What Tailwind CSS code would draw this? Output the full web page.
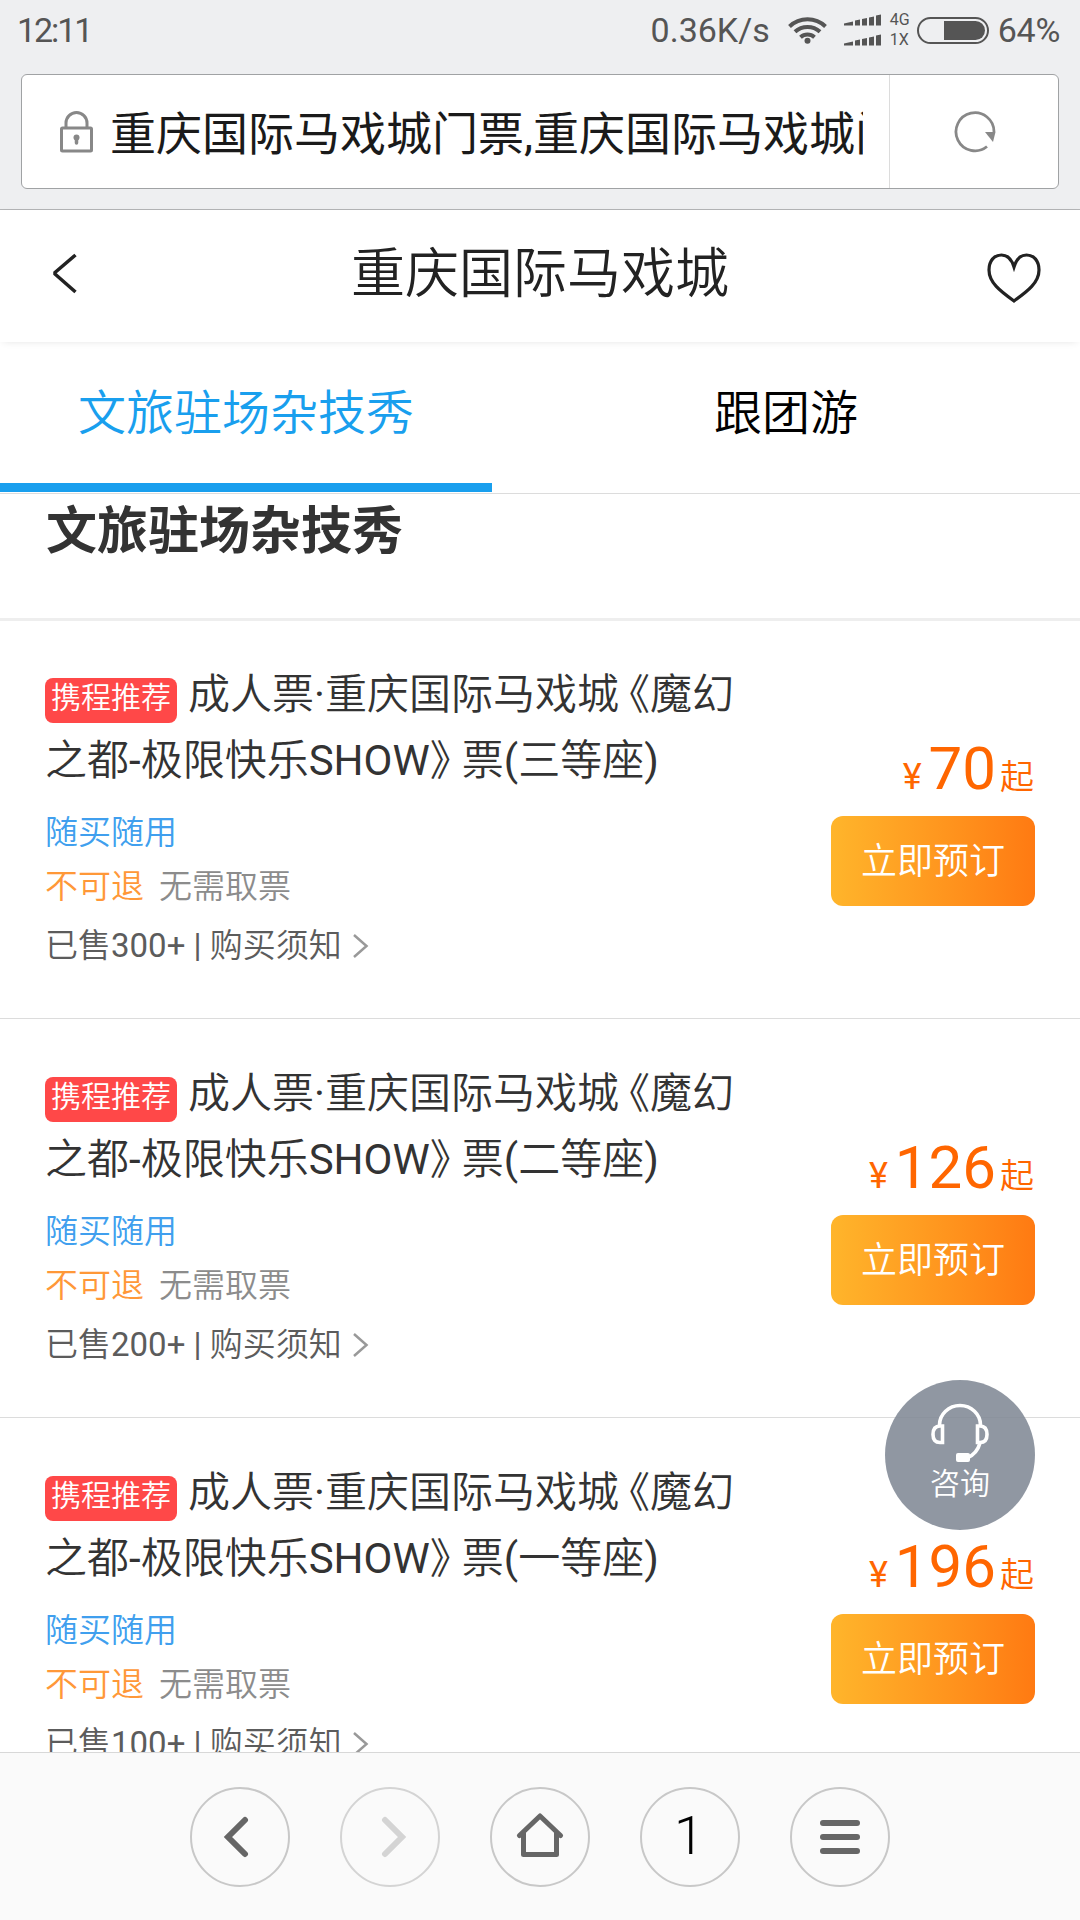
<!DOCTYPE html>
<html lang="zh-CN">
<head>
<meta charset="utf-8">
<title>重庆国际马戏城</title>
<script src="https://cdn.jsdelivr.net/npm/@tailwindcss/browser@4"></script>
</head>
<body class="bg-white">
<div class="relative flex h-[1920px] w-[1080px] flex-col overflow-hidden bg-white font-['Roboto','Noto_Sans_CJK_SC',sans-serif] font-[350] text-[#333]">

  <!-- Browser chrome -->
  <div class="flex h-[210px] shrink-0 flex-col border-b border-[#b4b5b7] bg-[#eeeff1]">
    <div class="flex h-[60px] items-center pr-[20px] pl-[17px] text-[34px] leading-[60px] font-normal text-[#555]">
      <span class="tracking-[-2.1px]">12:11</span>
      <span class="ml-auto">0.36K/s</span>
      <svg class="ml-[18px] h-[28px] w-[39px]" viewBox="0 0 39 28" fill="none" stroke="#555" stroke-width="4">
        <path d="M1.5 10.500a26 26 0 0 1 36 0M7 15.800a18.500 18.500 0 0 1 25 0M12.500 21.200a10.500 10.500 0 0 1 14 0"/>
        <circle cx="19.500" cy="24.800" r="3" fill="#555" stroke="none"/>
      </svg>
      <svg class="ml-[17px] h-[32px] w-[38px]" viewBox="0 0 38 32" fill="#555">
        <path id="sig" d="M0 11.500V9.500L9 7.500V11.500ZM11 11.500V6.500L16 5.500V11.500ZM18 11.500V5L23 4V11.500ZM25 11.500V3.500L30 2.500V11.500ZM32 11.500V1.500L37 .500V11.500Z"/>
        <use href="#sig" y="20"/>
      </svg>
      <div class="ml-[8px] flex w-[23px] flex-col text-[16px] leading-[20px] font-normal"><span>4G</span><span>1X</span></div>
      <div class="ml-[4px] flex h-[27px] w-[72px] items-center justify-end rounded-full border-2 border-[#555] pr-[2px]"><div class="h-[19px] w-[41px] rounded-r-full bg-[#555]"></div></div>
      <span class="ml-[9px] tracking-[-0.3px]">64%</span>
    </div>
    <div class="mx-[21px] mt-[14px] flex h-[115px] rounded-[6px] border border-[#a0a2a4] bg-white">
      <div class="flex w-[868px] items-center border-r border-[#dcdcdc]">
        <svg class="ml-[38px] h-[42px] w-[33px] shrink-0" viewBox="0 0 33 42" fill="none" stroke="#888" stroke-width="3">
          <rect x="1.500" y="17" width="30" height="23" rx="1"/><path d="M6 17V12a10.500 10.500 0 0 1 21 0V17"/>
          <path d="M16.500 28V32" stroke-linecap="round" stroke-width="3.500"/><circle cx="16.500" cy="26.500" r="3" fill="#888" stroke="none"/>
        </svg>
        <div class="mt-[4px] ml-[17px] w-[753px] overflow-hidden text-[46px] leading-[80px] font-normal whitespace-nowrap text-[#1a1a1a]">重庆国际马戏城门票,重庆国际马戏城门票</div>
      </div>
      <div class="flex flex-1 items-center justify-center">
        <svg class="ml-[2px] h-[42px] w-[42px]" viewBox="0 0 42 42" fill="none" stroke="#888" stroke-width="2.800">
          <path d="M33 35.500A19 19 0 1 1 40 21"/><path d="M31 21H41.500L39 31Z" fill="#888" stroke="none"/>
        </svg>
      </div>
    </div>
  </div>

  <!-- Page header -->
  <header class="flex h-[132px] shrink-0 items-center px-[39px] shadow-[0_2px_8px_-3px_rgba(0,0,0,0.13)]">
    <svg class="mb-[5px] ml-[13px] h-[42px] w-[26px]" viewBox="0 0 26 42" fill="none" stroke="#222" stroke-width="3.500"><path d="M23.500 2 3 19.500V21L23.500 39"/></svg>
    <h1 class="mb-[3px] ml-[15px] flex-1 text-center text-[54px] leading-[80px] text-[#222]">重庆国际马戏城</h1>
    <svg class="mt-[4px] h-[50px] w-[54px]" viewBox="0 0 54 50" fill="none" stroke="#222" stroke-width="3.200"><path d="M27 14C24.500 6 19.500 2 14.500 2C7 2 2 8 2 17C2 29.500 13 38 27 48C41 38 52 29.500 52 17C52 8 47 2 39.500 2C34.500 2 29.500 6 27 14Z"/></svg>
  </header>

  <!-- Tabs -->
  <nav class="flex h-[152px] shrink-0 border-b border-[#dcdcdc] text-[48px] leading-[143px]">
    <div class="mb-[1px] w-[492px] border-b-[9px] border-[#199fee] text-center text-[#199fee]">文旅驻场杂技秀</div>
    <div class="flex-1 text-center text-black">跟团游</div>
  </nav>

  <main class="min-h-0 flex-1 overflow-hidden">
    <h2 class="h-[127px] border-b-[3px] border-[#eee] pl-[46px] text-[51px] leading-[76px] font-bold text-[#333]">文旅驻场杂技秀</h2>
    <div id="tickets" class="-mt-px"></div>
  </main>

  <!-- Browser toolbar -->
  <footer class="flex h-[168px] shrink-0 justify-center gap-[50px] border-t border-[#d8d8d8] bg-[#fafafa] pt-[34px]">
    <div class="flex size-[100px] items-center justify-center rounded-full border-2 border-[#c8c8c8]">
      <svg class="mr-[8px] h-[42px] w-[26px]" viewBox="0 0 26 42" fill="none" stroke="#666" stroke-width="6" stroke-linecap="round"><path d="M22 4 5 21 22 38"/></svg>
    </div>
    <div class="flex size-[100px] items-center justify-center rounded-full border-2 border-[#d4d4d4]">
      <svg class="ml-[8px] h-[42px] w-[26px]" viewBox="0 0 26 42" fill="none" stroke="#d4d4d4" stroke-width="6" stroke-linecap="round"><path d="M4 4 21 21 4 38"/></svg>
    </div>
    <div class="flex size-[100px] items-center justify-center rounded-full border-2 border-[#c8c8c8]">
      <svg class="mb-[4px] h-[44px] w-[48px]" viewBox="0 0 48 44" fill="none" stroke="#666" stroke-width="5" stroke-linecap="round" stroke-linejoin="round"><path d="M3.500 22.500 24 3 44.500 22.500M7.500 20V41.500H40.500V20"/></svg>
    </div>
    <div class="flex size-[100px] items-center justify-center rounded-full border-2 border-[#c8c8c8] pr-[2px] pb-[2px] text-[54px] leading-[94px] font-light text-black">1</div>
    <div class="flex size-[100px] flex-col items-center justify-center gap-[8px] rounded-full border-2 border-[#c8c8c8]">
      <i class="h-[6px] w-[40px] rounded-full bg-[#666]"></i><i class="h-[6px] w-[40px] rounded-full bg-[#666]"></i><i class="h-[6px] w-[40px] rounded-full bg-[#666]"></i>
    </div>
  </footer>

  <!-- Floating support button -->
  <div class="absolute top-[1380px] left-[885px] flex size-[150px] flex-col items-center rounded-full bg-[#7f8794]/87 pt-[23px] text-white">
    <svg class="h-[60px] w-[60px]" viewBox="0 0 60 60" fill="none" stroke="#fff" stroke-width="3.600">
      <path d="M9.500 22A20.500 19.500 0 0 1 50.500 22"/>
      <path d="M12.500 23V39.500H10Q3 39.500 3 31.500Q3 23 10 23ZM47.500 23V39.500H50Q57 39.500 57 31.500Q57 23 50 23Z"/>
      <path d="M50 40Q47 51 37 55"/><rect x="26" y="50" width="14" height="9" rx="2" fill="#fff" stroke="none"/>
    </svg>
    <span class="text-[30px] leading-[42px]">咨询</span>
  </div>
</div>

<script>
const tickets = [
  { seat: '三', sold: 300, price: 70 },
  { seat: '二', sold: 200, price: 126 },
  { seat: '一', sold: 100, price: 196 },
];
document.getElementById('tickets').innerHTML = tickets.map(t => `
  <article class="flex h-[399px] items-start border-b border-[#dcdcdc] pr-[45px] pl-[45px]">
    <div class="flex w-[740px] flex-col whitespace-nowrap">
      <div class="mt-[42px] flex h-[66px] items-center text-[42px] leading-[66px]">
        <span class="mt-[11px] h-[45px] w-[132px] rounded-[8px] bg-[#ff4848] text-center text-[30px] leading-[40px] text-white">携程推荐</span>
        <span class="ml-[11px]">成人票<span class="font-normal">·</span>重庆国际马戏城<span class="ml-[10px] [font-feature-settings:'halt']">《</span>魔幻</span>
      </div>
      <div class="text-[42px] leading-[66px]">之都<span class="font-normal">-</span>极限快乐<span class="font-normal">SHOW</span><span class="mr-[11px] [font-feature-settings:'halt']">》</span>票<span class="font-normal">(</span>${t.seat}等座<span class="font-normal">)</span></div>
      <div class="mt-[11px] text-[33px] leading-[55px] text-[#409fee]">随买随用</div>
      <div class="flex gap-[15px] text-[33px] leading-[54px]"><span class="text-[#ff9838]">不可退</span><span class="text-[#8c8c8c]">无需取票</span></div>
      <div class="mt-[2px] flex items-center text-[33px] leading-[60px] text-[#5c5c5c]">已售<span class="font-normal whitespace-pre">${t.sold}+ | </span>购买须知
        <svg class="ml-[10px] h-[26px] w-[17px]" viewBox="0 0 17 26" fill="none" stroke="#999" stroke-width="2.500"><path d="M2 2 14.500 13 2 24"/></svg>
      </div>
    </div>
    <div class="flex flex-1 flex-col items-end">
      <div class="mt-[109px] mr-[1px] flex h-[87px] items-baseline text-[#ff6600]"><span class="mr-[7px] text-[36px] leading-[80px] font-normal">¥</span><span class="text-[60px] leading-[80px] font-normal">${t.price}</span><span class="ml-[4px] text-[34px] leading-[80px]">起</span></div>
      <div class="h-[90px] w-[204px] rounded-[12px] bg-linear-to-r from-[#ffb52b] to-[#ff7a12] text-center text-[36px] leading-[92px] text-white">立即预订</div>
    </div>
  </article>`).join('');
</script>
</body>
</html>
